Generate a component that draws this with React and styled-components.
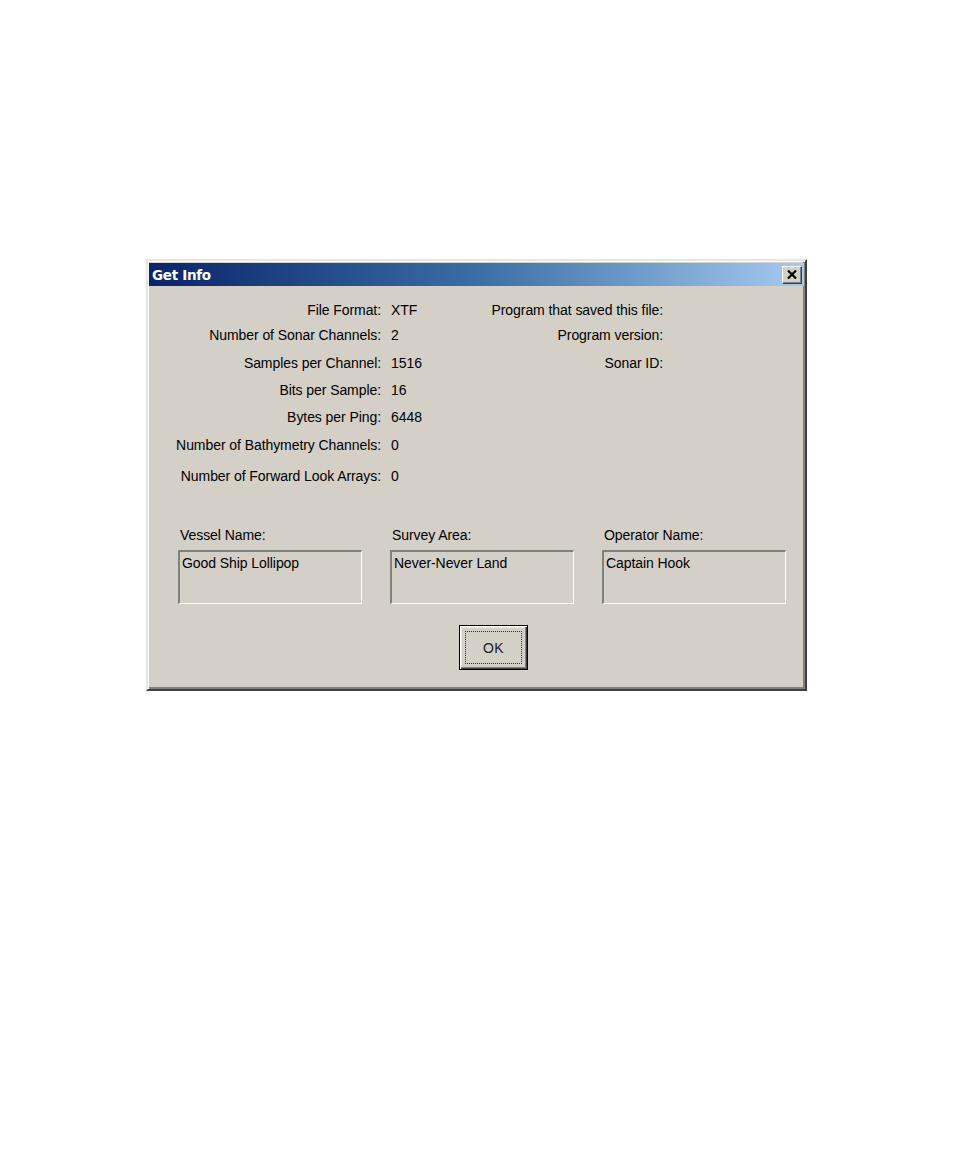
import React from "react";
import styled, { createGlobalStyle } from "styled-components";

const Global = createGlobalStyle`
  html, body { margin: 0; padding: 0; background: #ffffff; }
  body { font-family: "Liberation Sans", Arial, sans-serif; }
`;

const Page = styled.div`
  width: 954px;
  height: 1159px;
  padding: 259px 0 0 146px;
  box-sizing: border-box;
`;

const Window = styled.div`
  width: 661px;
  height: 432px;
  box-sizing: border-box;
  background: #d4d0c8;
  border-style: solid;
  border-width: 2px 2px 2px 2px;
  border-color: #e8e6e0 #404040 #404040 #e8e6e0;
  box-shadow: inset 1px 1px 0 #ffffff, inset -2px -2px 0 #808080;
  padding: 2px 1px 3px 1px;
  display: flex;
  flex-direction: column;
  font-family: "Liberation Sans", Arial, sans-serif;
  font-size: 14px;
  letter-spacing: -0.07px;
  color: #000;
`;

const TitleBar = styled.div`
  height: 23px;
  background: linear-gradient(to right, #0a246a 0%, #3a6ea5 50%, #a6caf0 100%);
  display: flex;
  align-items: center;
  justify-content: space-between;
  padding: 0 2px 0 3px;
  flex-shrink: 0;
`;

const Title = styled.span`
  color: #fff;
  font-family: "DejaVu Sans", Verdana, sans-serif;
  font-weight: bold;
  font-size: 13.5px;
  letter-spacing: -0.3px;
`;

const CloseButton = styled.div`
  width: 20px;
  height: 18px;
  box-sizing: border-box;
  background: #d4d0c8;
  border-style: solid;
  border-width: 1px;
  border-color: #ffffff #404040 #404040 #ffffff;
  box-shadow: inset -1px -1px 0 #808080;
  display: flex;
  align-items: center;
  justify-content: center;
`;

const InfoGrid = styled.div`
  display: grid;
  grid-template-columns: 232px 79px 203px 1fr;
  grid-template-rows: 25px 28px 27px 27px 28px 31px 24px;
  margin-top: 12px;
  line-height: 24px;
  white-space: nowrap;
`;

const Label = styled.div`
  text-align: right;
  grid-column: ${(p) => p.$col};
  grid-row: ${(p) => p.$row};
`;

const Value = styled.div`
  padding-left: 10px;
  grid-column: 2;
  grid-row: ${(p) => p.$row};
`;

const FieldsRow = styled.div`
  display: flex;
  gap: 28px;
  padding-left: 29px;
  margin-top: 35px;
`;

const Field = styled.div`
  display: flex;
  flex-direction: column;
  width: 184px;
`;

const FieldLabel = styled.div`
  line-height: 24px;
  padding-left: 2px;
`;

const FieldBox = styled.div`
  margin-top: 3px;
  height: 54px;
  box-sizing: border-box;
  border-style: solid;
  border-width: 2px 1px 1px 2px;
  border-color: #808080 #ffffff #ffffff #808080;
  padding: 2px 2px;
  line-height: 18px;
`;

const ButtonRow = styled.div`
  display: flex;
  padding-left: 310px;
  margin-top: 21px;
`;

const OkButton = styled.div`
  width: 69px;
  height: 45px;
  box-sizing: border-box;
  border: 1px solid #000;
  background: #d4d0c8;
  box-shadow: inset 1px 1px 0 #ffffff, inset -1px -1px 0 #404040, inset -2px -2px 0 #808080, inset 2px 2px 0 #e8e6e0;
  padding: 5px;
  display: flex;
`;

const FocusRect = styled.div`
  flex: 1;
  border: 1px dotted #303030;
  display: flex;
  align-items: center;
  justify-content: center;
  font-size: 14px;
  letter-spacing: 0.5px;
  color: #202020;
`;

const leftRows = [
  ["File Format:", "XTF"],
  ["Number of Sonar Channels:", "2"],
  ["Samples per Channel:", "1516"],
  ["Bits per Sample:", "16"],
  ["Bytes per Ping:", "6448"],
  ["Number of Bathymetry Channels:", "0"],
  ["Number of Forward Look Arrays:", "0"],
];

const rightRows = ["Program that saved this file:", "Program version:", "Sonar ID:"];

const fields = [
  ["Vessel Name:", "Good Ship Lollipop"],
  ["Survey Area:", "Never-Never Land"],
  ["Operator Name:", "Captain Hook"],
];

export default function App() {
  return (
    <>
      <Global />
      <Page>
        <Window>
          <TitleBar>
            <Title>Get Info</Title>
            <CloseButton>
              <svg width="10" height="9" viewBox="0 0 10 9">
                <path d="M1 0.5 L9 8.5 M9 0.5 L1 8.5" stroke="#000" strokeWidth="2.2" />
              </svg>
            </CloseButton>
          </TitleBar>
          <InfoGrid>
            {leftRows.map(([l, v], i) => (
              <React.Fragment key={l}>
                <Label $col={1} $row={i + 1}>{l}</Label>
                <Value $row={i + 1}>{v}</Value>
              </React.Fragment>
            ))}
            {rightRows.map((l, i) => (
              <Label key={l} $col={3} $row={i + 1}>{l}</Label>
            ))}
          </InfoGrid>
          <FieldsRow>
            {fields.map(([l, v]) => (
              <Field key={l}>
                <FieldLabel>{l}</FieldLabel>
                <FieldBox>{v}</FieldBox>
              </Field>
            ))}
          </FieldsRow>
          <ButtonRow>
            <OkButton>
              <FocusRect>OK</FocusRect>
            </OkButton>
          </ButtonRow>
        </Window>
      </Page>
    </>
  );
}
